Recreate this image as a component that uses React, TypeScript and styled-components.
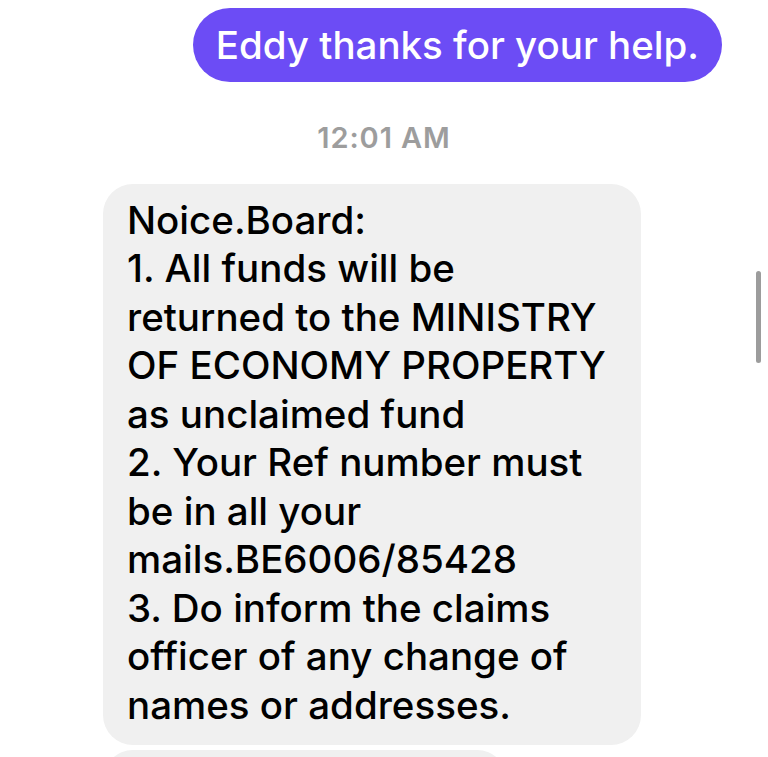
import React from 'react';
import styled, { createGlobalStyle } from 'styled-components';

const GlobalStyle = createGlobalStyle`
  html, body {
    margin: 0;
    padding: 0;
    background: #ffffff;
  }
  body {
    font-family: Inter, "Noto Sans", "Liberation Sans", sans-serif;
    -webkit-font-smoothing: antialiased;
  }
`;

const Screen = styled.div`
  position: relative;
  width: 768px;
  height: 757px;
  overflow: hidden;
  background: #ffffff;
`;

const Thread = styled.div`
  display: flex;
  flex-direction: column;
  padding: 8px 46px 0 103px;
`;

const Bubble = styled.div<{ $outgoing?: boolean }>`
  font-size: 38.5px;
  font-weight: 500;
  line-height: 48.5px;
  letter-spacing: 0;
  color: ${p => (p.$outgoing ? '#ffffff' : '#000000')};
  background: ${p => (p.$outgoing ? '#6c4cf5' : '#f0f0f0')};
  border-radius: ${p => (p.$outgoing ? '37px' : '30px')};
  padding: ${p => (p.$outgoing ? '13px 23px 12px' : '12px 24px 16px')};
  align-self: ${p => (p.$outgoing ? 'flex-end' : 'flex-start')};
  white-space: pre;
  box-sizing: border-box;
`;

const IncomingBubble = styled(Bubble)`
  width: 538px;
`;

const PeekBubble = styled.div`
  margin-top: 5px;
  width: 404px;
  height: 60px;
  border-radius: 30px;
  background: #f0f0f0;
`;

const Timestamp = styled.div`
  align-self: center;
  margin: 41px 0 31px -57px;
  font-size: 29px;
  line-height: 30px;
  font-weight: 600;
  letter-spacing: 0.9px;
  color: #9d9d9d;
`;

const ScrollThumb = styled.div`
  position: absolute;
  top: 271px;
  left: 756px;
  width: 5px;
  height: 92px;
  border-radius: 3px;
  background: #9c9c9c;
`;

const noticeLines = [
  'Noice.Board:',
  '1. All funds will be',
  'returned to the MINISTRY',
  'OF ECONOMY PROPERTY',
  'as unclaimed fund',
  '2. Your Ref number must',
  'be in all your',
  'mails.BE6006/85428',
  '3. Do inform the claims',
  'officer of any change of',
  'names or addresses.',
];

export default function App() {
  return (
    <Screen>
      <GlobalStyle />
      <Thread>
        <Bubble $outgoing>Eddy thanks for your help.</Bubble>
        <Timestamp>12:01 AM</Timestamp>
        <IncomingBubble>{noticeLines.join('\n')}</IncomingBubble>
        <PeekBubble />
      </Thread>
      <ScrollThumb />
    </Screen>
  );
}
